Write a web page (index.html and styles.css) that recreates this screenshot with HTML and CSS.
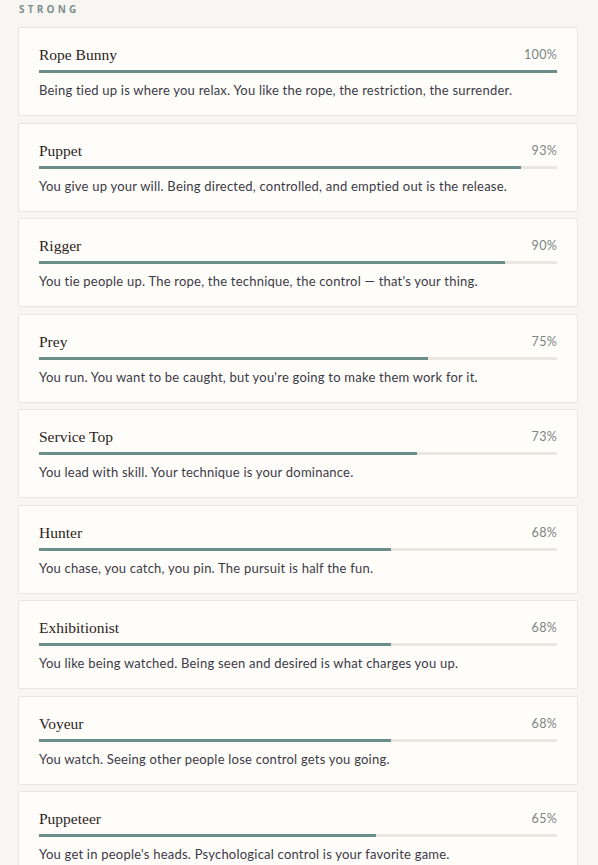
FILE: index.html
```html
<!DOCTYPE html>
<html lang="en">
<head>
<meta charset="utf-8">
<link rel="stylesheet" href="styles.css">
</head>
<body>
<section class="group">
  <h2 class="group-label">STRONG</h2>
  <div class="card">
    <div class="row"><span class="name">Rope Bunny</span><span class="pct">100%</span></div>
    <div class="track"><div class="fill" style="width:100%"></div></div>
    <p class="desc">Being tied up is where you relax. You like the rope, the restriction, the surrender.</p>
  </div>
  <div class="card">
    <div class="row"><span class="name">Puppet</span><span class="pct">93%</span></div>
    <div class="track"><div class="fill" style="width:93%"></div></div>
    <p class="desc">You give up your will. Being directed, controlled, and emptied out is the release.</p>
  </div>
  <div class="card">
    <div class="row"><span class="name">Rigger</span><span class="pct">90%</span></div>
    <div class="track"><div class="fill" style="width:90%"></div></div>
    <p class="desc">You tie people up. The rope, the technique, the control — that's your thing.</p>
  </div>
  <div class="card">
    <div class="row"><span class="name">Prey</span><span class="pct">75%</span></div>
    <div class="track"><div class="fill" style="width:75%"></div></div>
    <p class="desc">You run. You want to be caught, but you're going to make them work for it.</p>
  </div>
  <div class="card">
    <div class="row"><span class="name">Service Top</span><span class="pct">73%</span></div>
    <div class="track"><div class="fill" style="width:73%"></div></div>
    <p class="desc">You lead with skill. Your technique is your dominance.</p>
  </div>
  <div class="card">
    <div class="row"><span class="name">Hunter</span><span class="pct">68%</span></div>
    <div class="track"><div class="fill" style="width:68%"></div></div>
    <p class="desc">You chase, you catch, you pin. The pursuit is half the fun.</p>
  </div>
  <div class="card">
    <div class="row"><span class="name">Exhibitionist</span><span class="pct">68%</span></div>
    <div class="track"><div class="fill" style="width:68%"></div></div>
    <p class="desc">You like being watched. Being seen and desired is what charges you up.</p>
  </div>
  <div class="card">
    <div class="row"><span class="name">Voyeur</span><span class="pct">68%</span></div>
    <div class="track"><div class="fill" style="width:68%"></div></div>
    <p class="desc">You watch. Seeing other people lose control gets you going.</p>
  </div>
  <div class="card">
    <div class="row"><span class="name">Puppeteer</span><span class="pct">65%</span></div>
    <div class="track"><div class="fill" style="width:65%"></div></div>
    <p class="desc">You get in people's heads. Psychological control is your favorite game.</p>
  </div>
</section>
</body>
</html>
```
FILE: styles.css
```css
html, body {
  margin: 0;
  padding: 0;
  background: #f8f6f2;
  overflow: hidden;
}
body {
  font-family: Lato, "Liberation Sans", sans-serif;
}
.group {
  padding: 3px 20px 0 18px;
  display: flex;
  flex-direction: column;
  gap: 6.5px;
}
.group-label {
  margin: 0 0 5.5px 1px;
  font-size: 10px;
  line-height: 12px;
  font-weight: 700;
  letter-spacing: 3.2px;
  color: #7d8e8d;
  font-family: "Open Sans", sans-serif;
}
.card {
  background: #fffdf9;
  border: 1px solid #e9e5df;
  border-radius: 2px;
  padding: 17px 20px 15px 20px;
}
.row {
  display: flex;
  justify-content: space-between;
  align-items: baseline;
  height: 20px;
}
.name {
  font-family: "Liberation Serif", "DejaVu Serif", serif;
  font-size: 15.5px;
  color: #2b231d;
  position: relative;
  top: 1px;
}
.pct {
  font-size: 12.5px;
  color: #7a8483;
  letter-spacing: 0.3px;
}
.track {
  margin-top: 5px;
  height: 3px;
  background: #ebe6e0;
}
.fill {
  height: 100%;
  background: #6b8e8b;
}
.desc {
  margin: 7px 0 0;
  font-size: 13px;
  line-height: 20px;
  letter-spacing: 0.22px;
  color: #3b3a47;
}
```
